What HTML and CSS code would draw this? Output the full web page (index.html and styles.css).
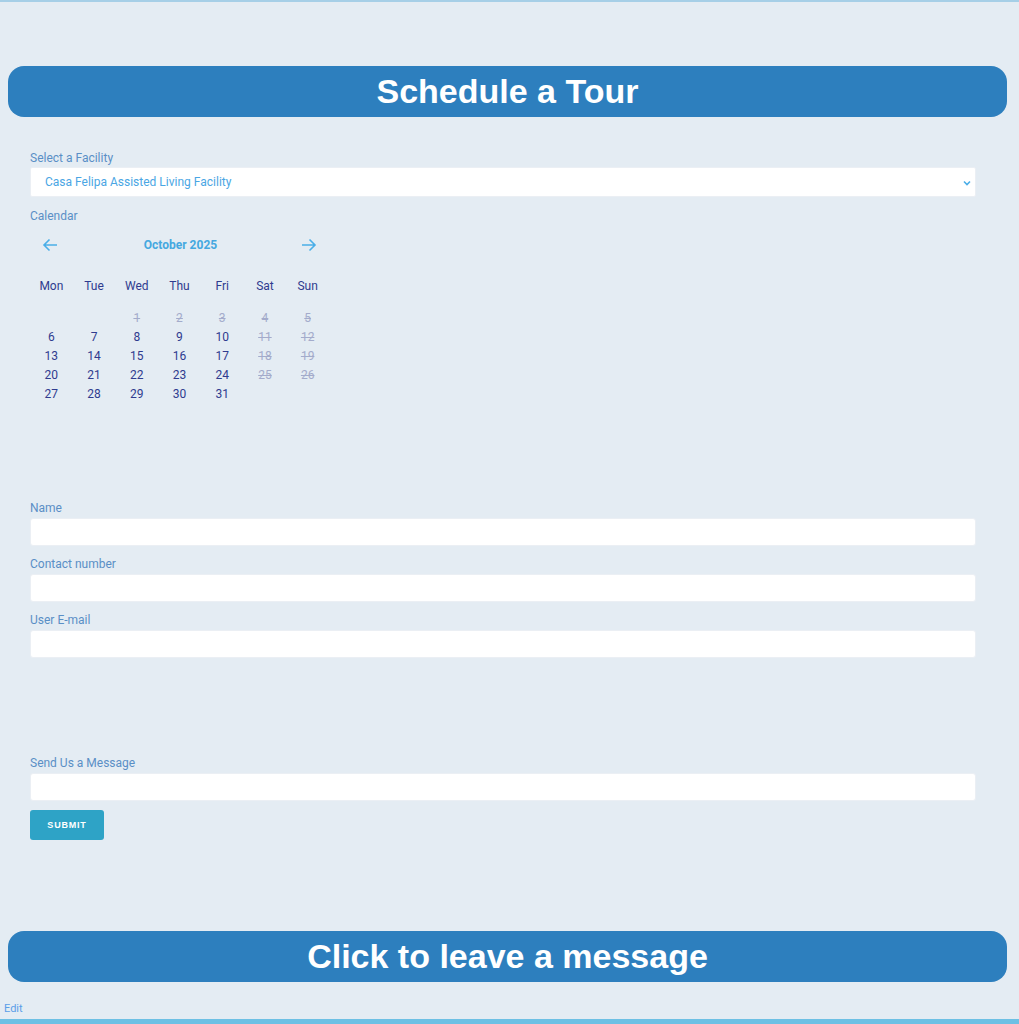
FILE: index.html
```html
<!DOCTYPE html>
<html lang="en">
<head>
<meta charset="utf-8">
<title>Schedule a Tour</title>
<link rel="stylesheet" href="styles.css">
</head>
<body>
<div class="page">
  <h2 class="banner banner-top">Schedule a Tour</h2>
  <form class="tour-form">
    <label class="field-label">Select a Facility</label>
    <div class="select-box">
      <span class="select-value">Casa Felipa Assisted Living Facility</span>
      <svg class="chev" width="8" height="6" viewBox="0 0 8 6"><path d="M1 1.5 L4 4.5 L7 1.5" fill="none" stroke="#4aaee8" stroke-width="1.6"/></svg>
    </div>
    <label class="field-label cal-label">Calendar</label>
    <div class="calendar">
      <div class="cal-nav">
        <svg class="arrow" width="16" height="14" viewBox="0 0 16 14"><path d="M15 7 H2 M7.5 1.5 L2 7 L7.5 12.5" fill="none" stroke="#4aaee8" stroke-width="1.6"/></svg>
        <span class="cal-month">October 2025</span>
        <svg class="arrow" width="16" height="14" viewBox="0 0 16 14"><path d="M1 7 H14 M8.5 1.5 L14 7 L8.5 12.5" fill="none" stroke="#4aaee8" stroke-width="1.6"/></svg>
      </div>
      <div class="cal-grid cal-head">
        <span>Mon</span><span>Tue</span><span>Wed</span><span>Thu</span><span>Fri</span><span>Sat</span><span>Sun</span>
      </div>
      <div class="cal-grid cal-days">
        <span></span><span></span><span class="off">1</span><span class="off">2</span><span class="off">3</span><span class="off">4</span><span class="off">5</span>
        <span>6</span><span>7</span><span>8</span><span>9</span><span>10</span><span class="off">11</span><span class="off">12</span>
        <span>13</span><span>14</span><span>15</span><span>16</span><span>17</span><span class="off">18</span><span class="off">19</span>
        <span>20</span><span>21</span><span>22</span><span>23</span><span>24</span><span class="off">25</span><span class="off">26</span>
        <span>27</span><span>28</span><span>29</span><span>30</span><span>31</span><span></span><span></span>
      </div>
    </div>
    <label class="field-label name-label">Name</label>
    <div class="text-input"></div>
    <label class="field-label gap-label">Contact number</label>
    <div class="text-input"></div>
    <label class="field-label gap-label">User E-mail</label>
    <div class="text-input"></div>
    <label class="field-label msg-label">Send Us a Message</label>
    <div class="text-input"></div>
    <button type="button" class="submit">SUBMIT</button>
  </form>
  <h2 class="banner banner-bottom">Click to leave a message</h2>
  <a class="edit-link">Edit</a>
</div>
<div class="bottom-bar"></div>
</body>
</html>
```
FILE: styles.css
```css
html, body {
  margin: 0;
  padding: 0;
  background: #e4ecf3;
}
body {
  border-top: 2px solid #a6cfe7;
  font-family: Roboto, "Liberation Sans", sans-serif;
  overflow: hidden;
}
.page {
  display: flex;
  flex-direction: column;
}
.banner {
  margin: 0 12px 0 8px;
  height: 51px;
  border-radius: 16px;
  background: #2d7fbe;
  color: #ffffff;
  font-family: "Liberation Sans", Arial, sans-serif;
  font-weight: 700;
  font-size: 34px;
  line-height: 51px;
  text-align: center;
}
.banner-top {
  margin-top: 64px;
}
.banner-bottom {
  margin-top: 91px;
}
.tour-form {
  display: flex;
  flex-direction: column;
  padding: 0 43px 0 30px;
  margin-top: 33px;
}
.field-label {
  font-size: 12px;
  line-height: 16px;
  color: #5a8fc6;
  margin-bottom: 1px;
}
.select-box {
  height: 30px;
  background: #fff;
  border: 1px solid #ebeff4;
  border-radius: 2px;
  box-sizing: border-box;
  display: flex;
  align-items: center;
  justify-content: space-between;
  padding: 0 4px 0 14px;
}
.select-value {
  font-size: 12px;
  color: #4aa6e4;
}
.chev {
  margin-top: 1px;
}
.cal-label {
  margin-top: 11px;
}
.calendar {
  width: 299px;
}
.cal-nav {
  margin-top: 6px;
  height: 28px;
  display: flex;
  align-items: center;
  justify-content: space-between;
  padding: 0 12px 0 12px;
}
.cal-month {
  font-size: 12px;
  font-weight: 700;
  color: #45a8e0;
  margin-left: 2px;
}
.cal-grid {
  display: grid;
  grid-template-columns: repeat(7, 1fr);
  text-align: center;
  font-size: 12px;
  color: #2f3b8f;
}
.cal-grid span {
  line-height: 19px;
}
.cal-head {
  margin-top: 18px;
}
.cal-days {
  margin-top: 13px;
}
.cal-days .off {
  color: #a3abcb;
  text-decoration: line-through;
}
.name-label {
  margin-top: 96px;
}
.text-input {
  height: 28px;
  background: #fff;
  border: 1px solid #ebeff4;
  border-radius: 3px;
  box-sizing: border-box;
}
.field-label + .text-input {
  margin-top: 1px;
}
.gap-label {
  margin-top: 10px;
}
.msg-label {
  margin-top: 97px;
}
.submit {
  align-self: flex-start;
  margin-top: 9px;
  width: 74px;
  height: 30px;
  border: none;
  border-radius: 3px;
  background: #2ea3c6;
  color: #fff;
  font-family: "Liberation Sans", Arial, sans-serif;
  font-weight: 700;
  font-size: 9px;
  letter-spacing: 0.8px;
  padding: 0;
}
.edit-link {
  margin: 19px 0 0 4px;
  font-size: 11px;
  line-height: 16px;
  color: #5a9ee8;
}
.bottom-bar {
  margin-top: 2px;
  height: 20px;
  background: #6dc0e4;
}
```
